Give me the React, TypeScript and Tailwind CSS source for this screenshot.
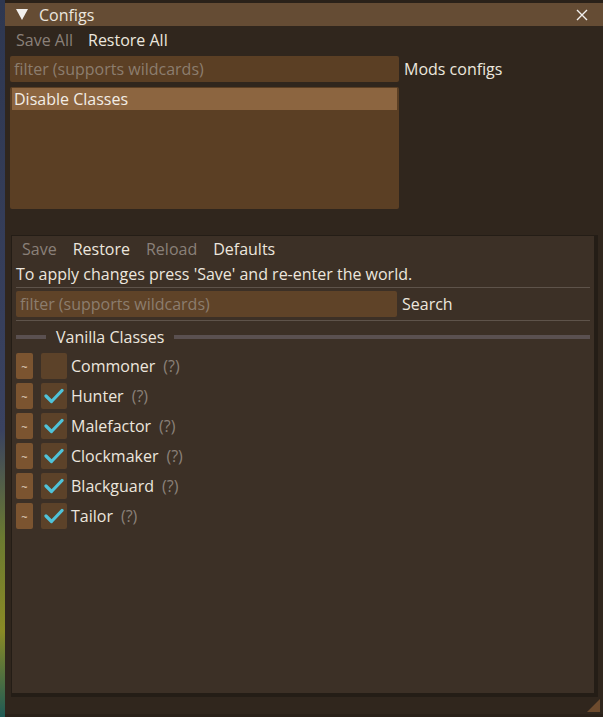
import React from "react";

const rows = ["Commoner", "Hunter", "Malefactor", "Clockmaker", "Blackguard", "Tailor"];

function Check() {
  return (
    <svg width="20" height="16" viewBox="0 0 20 16">
      <path d="M2 8 L7.5 13.5 L18 2.5" fill="none" stroke="#4fc3d9" strokeWidth="3.2" strokeLinecap="round" strokeLinejoin="round" />
    </svg>
  );
}

export default function App() {
  return (
    <div
      className="relative w-[603px] h-[717px] overflow-hidden flex bg-[#2a2119] text-[16px] leading-none"
      style={{ fontFamily: '"Open Sans", "Noto Sans", sans-serif' }}
    >
      <div className="w-[5px] h-full bg-[linear-gradient(180deg,#2e3750_0%,#3a4260_60%,#6b7a30_75%,#8a8a25_88%,#1f5a55_100%)]" />
      <div className="flex-1 flex flex-col pt-[3px] pb-[3px]">
        <div className="h-[23px] bg-[#654c34] flex items-center pl-[11px] pr-[15px] text-[#ece6de]">
          <svg width="12" height="11" viewBox="0 0 12 11" className="mr-[11px]">
            <path d="M0 0 H12 L6 11 Z" fill="#f2f0ee" />
          </svg>
          <span className="text-[16px]">Configs</span>
          <div className="flex-1" />
          <svg width="12" height="12" viewBox="0 0 12 12">
            <path d="M1 1 L11 11 M11 1 L1 11" stroke="#f2f0ee" strokeWidth="1.4" />
          </svg>
        </div>
        <div className="flex-1 bg-[#30261d] flex flex-col px-[5px]">
          <div className="h-[27px] flex items-center pl-[6px] gap-[15px] pt-[1px]">
            <span className="text-[#8a8079]">Save All</span>
            <span className="text-[#ece6de]">Restore All</span>
          </div>
          <div className="flex items-center mt-[3px]">
            <div className="w-[389px] h-[26px] bg-[#5b3f24] rounded-[2px] flex items-center pl-[4px] text-[#8c7d6e]">
              filter (supports wildcards)
            </div>
            <span className="ml-[5px] text-[#ece6de]">Mods configs</span>
          </div>
          <div className="w-[389px] h-[122px] bg-[#5b3f24] rounded-[2px] mt-[5px] p-[1px_2px]">
            <div className="h-[22px] bg-[#8c6540] flex items-center pl-[2px] text-[#f3ede6]">Disable Classes</div>
          </div>
          <div className="h-[26px]" />
          <div className="flex-1 ml-[1px] border-[1px] border-[#241d16] border-r-[4px] border-b-[4px] bg-[#3c3026] flex flex-col px-[4px] mb-[17px]">
            <div className="h-[25px] flex items-center gap-[16px] pl-[6px] pt-[1px]">
              <span className="text-[#8a8079]">Save</span>
              <span className="text-[#ece6de]">Restore</span>
              <span className="text-[#8a8079]">Reload</span>
              <span className="text-[#ece6de]">Defaults</span>
            </div>
            <div className="h-[26px] flex items-center text-[#ece6de]">To apply changes press 'Save' and re-enter the world.</div>
            <div className="h-[1px] bg-[#5e534a]" />
            <div className="flex items-center mt-[3px] mb-[3px]">
              <div className="w-[381px] h-[26px] bg-[#5f4328] rounded-[2px] flex items-center pl-[4px] text-[#8c7d6e]">
                filter (supports wildcards)
              </div>
              <span className="ml-[5px] text-[#ece6de]">Search</span>
            </div>
            <div className="h-[1px] bg-[#5e534a]" />
            <div className="h-[30px] flex items-center pt-[2px]">
              <div className="w-[30px] h-[4px] bg-[#5a5050]" />
              <span className="mx-[10px] text-[#ece6de]">Vanilla Classes</span>
              <div className="flex-1 h-[4px] bg-[#5a5050]" />
            </div>
            <div className="flex flex-col">
              {rows.map((r, i) => (
                <div key={r} className="h-[30px] flex items-center">
                  <div className="w-[17px] h-[26px] bg-[#7b5430] rounded-[2px] flex items-center justify-center text-[#e6d8c8] text-[11px]">~</div>
                  <div className="ml-[8px] w-[26px] h-[26px] bg-[#5c4229] rounded-[2px] flex items-center justify-center">
                    {i > 0 && <Check />}
                  </div>
                  <span className="ml-[4px] text-[#ece6de]">{r}</span>
                  <span className="ml-[8px] text-[#8a8079]">(?)</span>
                </div>
              ))}
            </div>
          </div>
        </div>
      </div>
      <svg className="absolute right-[3px] bottom-[5px]" width="13" height="13" viewBox="0 0 13 13">
        <path d="M13 0 V13 H0 Z" fill="#6d4b2e" />
      </svg>
    </div>
  );
}
